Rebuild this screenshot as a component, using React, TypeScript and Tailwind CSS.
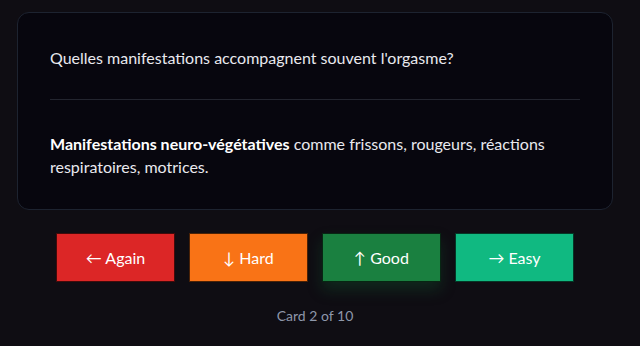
const grades = [
  { label: '← Again', cls: 'bg-[#dc2626]' },
  { label: '↓ Hard', cls: 'bg-[#f97316]' },
  { label: '↑ Good', cls: 'bg-[#1a8040] shadow-[0_8px_14px_rgba(20,120,60,0.25)]' },
  { label: '→ Easy', cls: 'bg-[#10b981]' },
]

export default function App() {
  return (
    <div className="min-h-[346px] bg-[#0f0d13] pt-3 pl-[17px] pr-[27px] font-['Lato','Noto_Sans',sans-serif] text-[#e9e9ee]">
      <div className="rounded-xl border border-[#1d2330] bg-[#07060e] px-8 pt-[33px] pb-[31px]">
        <p className="text-base leading-6">Quelles manifestations accompagnent souvent l'orgasme?</p>
        <hr className="mt-[29px] mb-[32px] border-t border-[#23252f]" />
        <p className="text-base leading-[23px]">
          <strong className="font-bold text-white">Manifestations neuro-végétatives</strong> comme frissons, rougeurs, réactions respiratoires, motrices.
        </p>
      </div>

      <div className="mt-[23px] flex justify-center gap-[14px]">
        {grades.map((g) => (
          <button
            key={g.label}
            className={`h-[49px] w-[119px] border border-black/70 text-base text-white ${g.cls}`}
          >
            {g.label}
          </button>
        ))}
      </div>

      <p className="mt-6 text-center text-sm text-[#8e97aa]">Card 2 of 10</p>
    </div>
  )
}
